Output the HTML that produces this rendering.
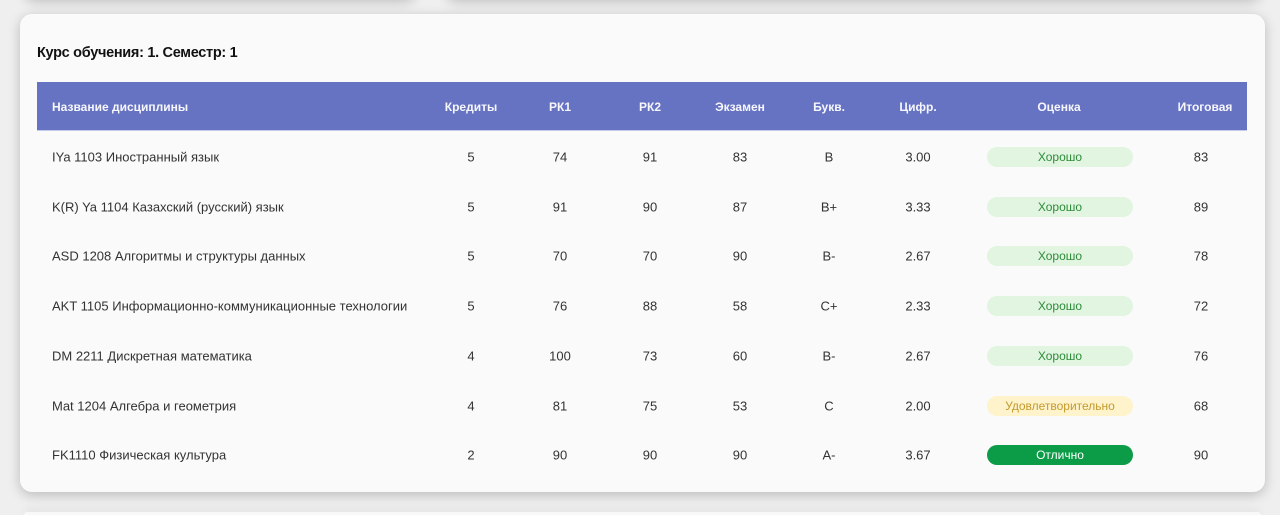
<!DOCTYPE html>
<html><head><meta charset="utf-8"><style>
*{margin:0;padding:0;box-sizing:border-box}
html,body{width:1280px;height:515px;overflow:hidden}
body{background:#efefef;font-family:"Liberation Sans",sans-serif;position:relative}
.top1{position:absolute;left:24px;top:-30px;width:392px;height:28px;background:#f4f4f4;border-radius:12px;box-shadow:0 4px 12px rgba(0,0,0,.2)}
.top2{position:absolute;left:446px;top:-30px;width:815px;height:28px;background:#f4f4f4;border-radius:12px;box-shadow:0 4px 12px rgba(0,0,0,.2)}
.bot{position:absolute;left:24px;top:512px;width:1237px;height:3px;background:#f8f8f8;border-radius:6px 6px 0 0;box-shadow:0 -2px 8px rgba(0,0,0,.1)}
.card{position:absolute;left:20px;top:14px;width:1245px;height:478px;background:#fafafa;border-radius:12px;box-shadow:0 3px 12px rgba(0,0,0,.22)}
h2{position:absolute;left:37px;top:45px;font-size:14.5px;font-weight:bold;color:#111;letter-spacing:-0.3px}
.head{position:absolute;left:37px;top:82px;width:1210px;height:49px;background:#6673c3;border-bottom:1px solid #c5cae9}
.c{position:absolute;font-size:13px;color:#333;transform:translate(-50%,-50%);white-space:nowrap}
.h{color:#fff;font-weight:bold;font-size:12px;opacity:.95}
.l{transform:translate(0,-50%)}
.b{position:absolute;left:987px;width:146px;height:20px;border-radius:10px;font-size:12px;text-align:center;line-height:20px;transform:translateY(-50%)}
.g{background:#e1f5e1;color:#2e8b3a}.y{background:#fff3cc;color:#c49a2c}.s{background:#0c9c48;color:#fff}
</style></head><body>
<div class="top1"></div><div class="top2"></div><div class="bot"></div>
<div class="card"></div>
<h2>Курс обучения: 1. Семестр: 1</h2>
<div class="head"></div>
<div id="t"></div>
<script>
var cols=[471,560,650,740,829,918,1059,1205];
var hd=["Кредиты","РК1","РК2","Экзамен","Букв.","Цифр.","Оценка","Итоговая"];
var h='<div class="c h l" style="left:52px;top:107px">Название дисциплины</div>';
hd.forEach(function(t,i){h+='<div class="c h" style="left:'+cols[i]+'px;top:107px">'+t+'</div>'});
var rows=[["IYa 1103 Иностранный язык",5,74,91,83,"B","3.00","g","Хорошо",83],
["K(R) Ya 1104 Казахский (русский) язык",5,91,90,87,"B+","3.33","g","Хорошо",89],
["ASD 1208 Алгоритмы и структуры данных",5,70,70,90,"B-","2.67","g","Хорошо",78],
["AKT 1105 Информационно-коммуникационные технологии",5,76,88,58,"C+","2.33","g","Хорошо",72],
["DM 2211 Дискретная математика",4,100,73,60,"B-","2.67","g","Хорошо",76],
["Mat 1204 Алгебра и геометрия",4,81,75,53,"C","2.00","y","Удовлетворительно",68],
["FK1110 Физическая культура",2,90,90,90,"A-","3.67","s","Отлично",90]];
rows.forEach(function(r,k){var y=157+k*49.7;
h+='<div class="c l" style="left:52px;top:'+y+'px">'+r[0]+'</div>';
[1,2,3,4,5,6].forEach(function(j,i){h+='<div class="c" style="left:'+cols[i]+'px;top:'+y+'px">'+r[j]+'</div>'});
h+='<div class="b '+r[7]+'" style="top:'+y+'px">'+r[8]+'</div>';
h+='<div class="c" style="left:1201px;top:'+y+'px">'+r[9]+'</div>';});
document.getElementById('t').innerHTML=h;
</script>
</body></html>
